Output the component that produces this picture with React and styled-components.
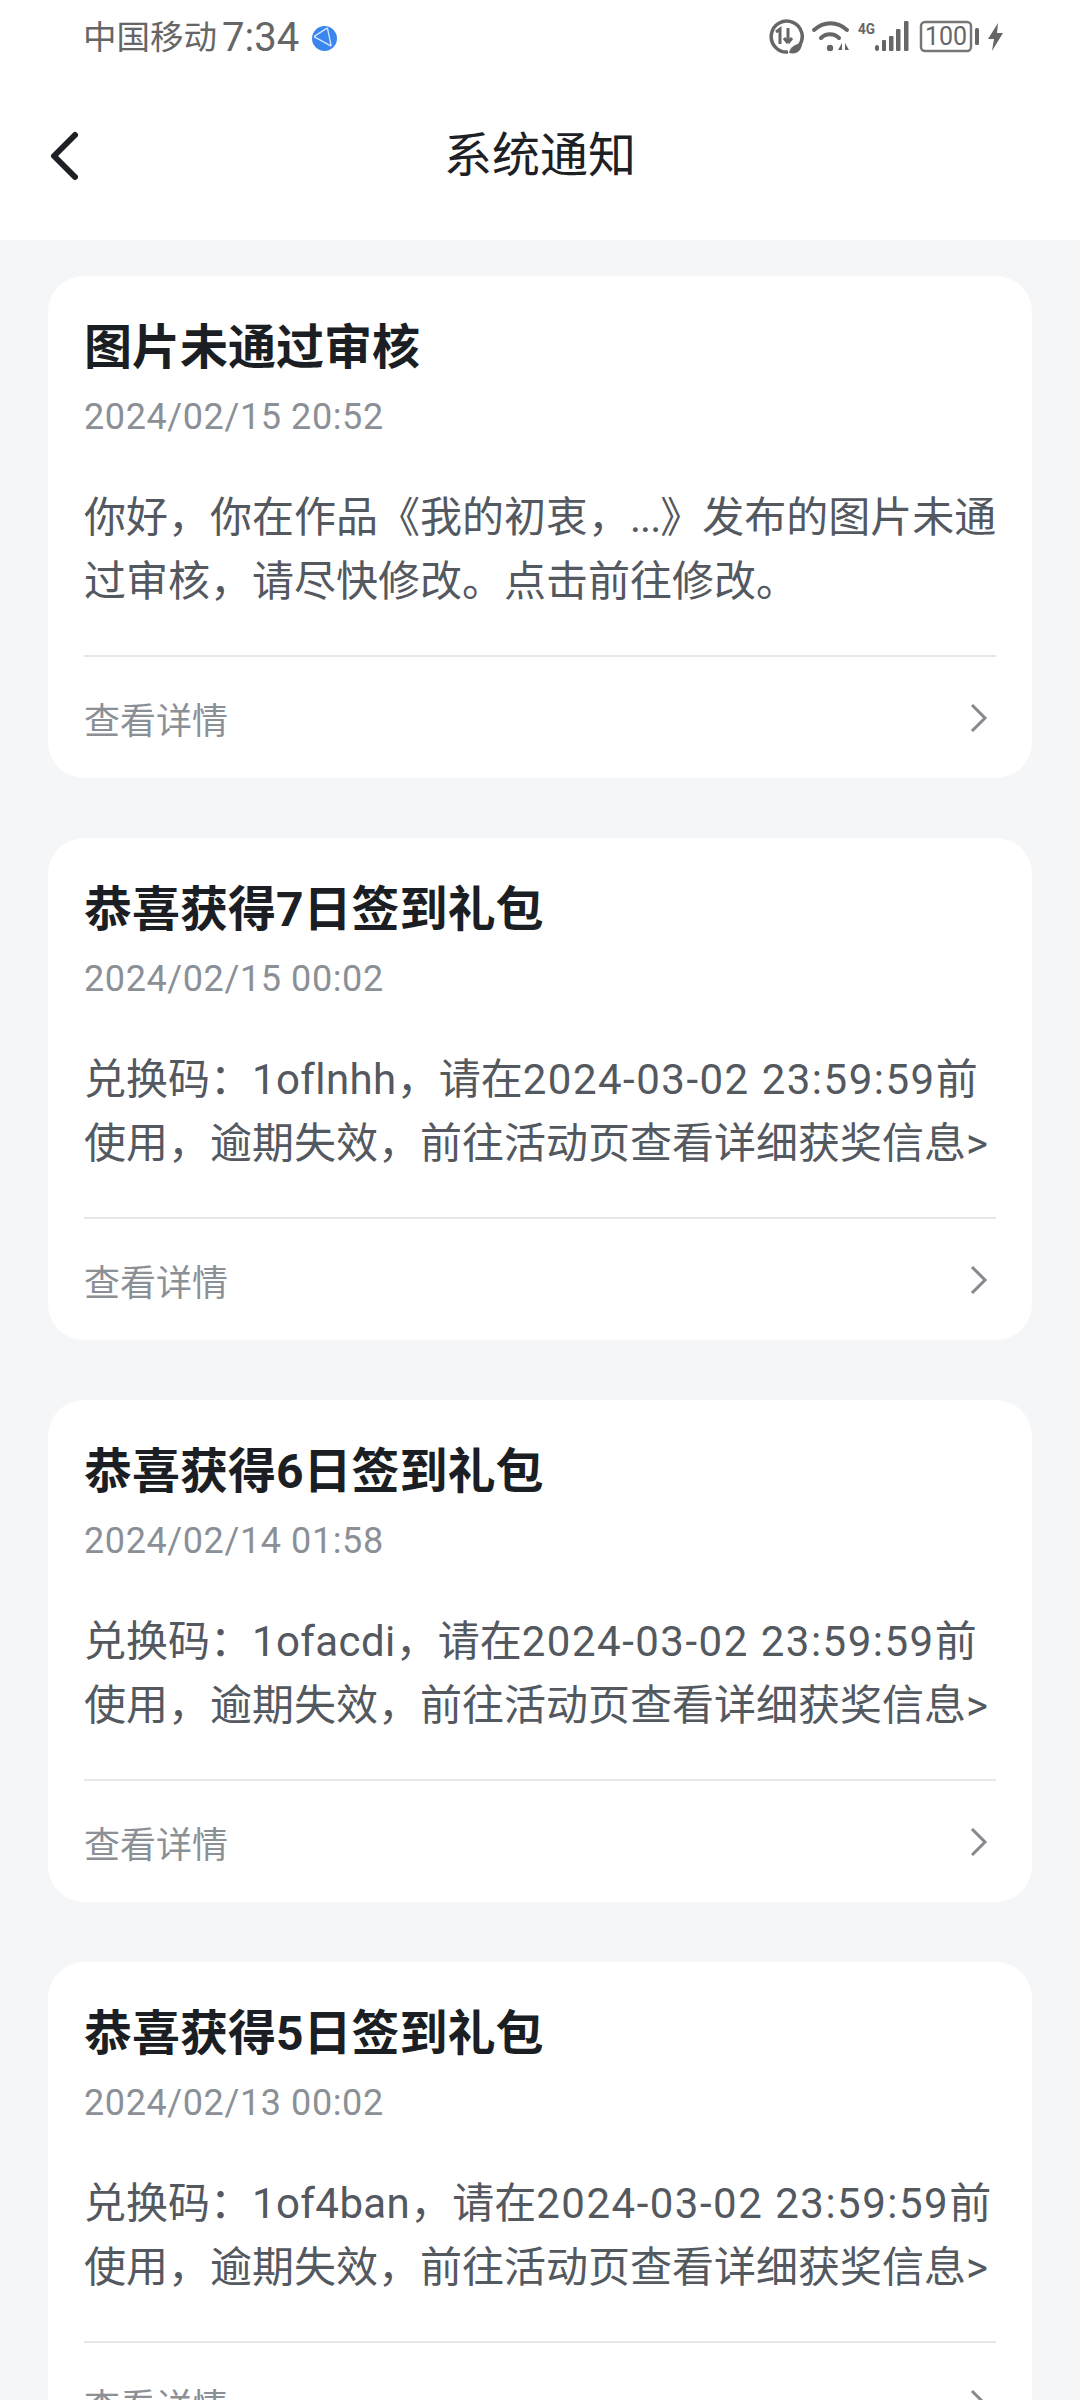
import React from 'react';
import styled, { createGlobalStyle } from 'styled-components';

const GlobalStyle = createGlobalStyle`
  html, body {
    margin: 0;
    padding: 0;
    background: #f5f6f8;
    font-family: Roboto, "Noto Sans CJK SC", sans-serif;
  }
  * { box-sizing: border-box; }
`;

const Page = styled.div`
  width: 1080px;
  height: 2400px;
  overflow: hidden;
  background: #f5f6f8;
`;

const TopArea = styled.header`
  background: #ffffff;
  height: 240px;
`;

const StatusBar = styled.div`
  height: 76px;
  padding: 0 75px 0 83px;
  display: flex;
  align-items: center;
  justify-content: space-between;
`;

const StatusLeft = styled.div`
  display: flex;
  align-items: center;
  color: #666666;
`;

const Carrier = styled.span`
  font-size: 33.5px;
  line-height: 40px;
`;

const Clock = styled.span`
  font-family: Roboto, sans-serif;
  font-size: 40px;
  line-height: 40px;
  margin-left: 5px;
  margin-right: 13px;
`;

const NavBar = styled.div`
  height: 160px;
  padding: 0 0 0 48px;
  display: grid;
  grid-template-columns: 1fr auto 1fr;
  align-items: center;
`;

const BackButton = styled.button`
  background: none;
  border: none;
  padding: 0;
  width: 36px;
  height: 60px;
  display: flex;
  align-items: center;
`;

const NavTitle = styled.h1`
  margin: 0;
  font-size: 48px;
  font-weight: 400;
  color: #1d2025;
  line-height: 60px;
  text-align: center;
  padding-right: 48px;
`;

const List = styled.main`
  padding: 36px 48px 0;
  display: flex;
  flex-direction: column;
  gap: 60px;
`;

const Card = styled.article`
  background: #ffffff;
  border-radius: 36px;
  padding: 36px 36px 0;
  height: 502px;
`;

const CardTitle = styled.h2`
  margin: 0;
  font-size: 48px;
  font-weight: 700;
  line-height: 72px;
  color: #1b1e23;
`;

const CardDate = styled.div`
  margin-top: 8px;
  font-size: 36px;
  line-height: 50px;
  letter-spacing: 0.6px;
  color: #8b8f96;
`;

const CardBody = styled.p`
  margin: 44px 0 0;
  font-size: 42px;
  line-height: 64px;
  color: #54585f;
  white-space: nowrap;
`;

// the digits in the reference run wider than Roboto's
const Code = styled.span`
  letter-spacing: 0.4px;
`;

const Deadline = styled.span`
  letter-spacing: 1.5px;
`;

const Dots = styled.span`
  letter-spacing: -1px;
`;

const CardFooter = styled.div`
  margin-top: 41px;
  border-top: 2px solid #e6e7e9;
  height: 120px;
  padding: 4px 8px 0 0;
  display: flex;
  align-items: center;
  justify-content: space-between;
`;

const MoreLabel = styled.span`
  font-size: 36px;
  color: #8b8f96;
`;

const StatusIcons = () => (
  <svg width="236" height="76" viewBox="769 0 236 76" fill="none">
    {/* data saver */}
    <path d="M799 46 A15.5 15.5 0 1 0 788 52" stroke="#666" strokeWidth="3.5" />
    <path d="M776 32l4-3v15" stroke="#666" strokeWidth="3" />
    <path d="M788 28v15M788 43l-4-5M788 43l4-5" stroke="#666" strokeWidth="3" />
    <path d="M789 53c1-6 6-9 13-10 0 7-5 12-13 10z" fill="#666" />
    {/* wifi */}
    <path d="M814 30c10-9 23-9 33 0" stroke="#666" strokeWidth="4" strokeLinecap="round" />
    <path d="M821 38c5-5 13-5 18 0" stroke="#666" strokeWidth="4" strokeLinecap="round" />
    <circle cx="830" cy="48" r="3.2" fill="#666" />
    <path d="M838 50l4-7v7zM845 43l4 7h-4z" fill="#666" />
    {/* signal */}
    <text x="858" y="34" fontFamily="Roboto" fontWeight="700" fontSize="15" textLength="17" lengthAdjust="spacingAndGlyphs" fill="#666">4G</text>
    <rect x="875" y="45" width="4" height="6" rx="2" fill="#666" />
    <rect x="882" y="40" width="4" height="11" rx="1" fill="#666" />
    <rect x="889" y="36" width="4.5" height="15" rx="1" fill="#666" />
    <rect x="896" y="29" width="4.5" height="22" rx="1" fill="#666" />
    <rect x="904" y="21" width="4.5" height="30" rx="1" fill="#666" />
    {/* battery */}
    <rect x="921" y="22" width="50" height="29" rx="4" stroke="#777" strokeWidth="2.5" />
    <text x="946" y="45" textAnchor="middle" fontFamily="Roboto" fontSize="25" fill="#666">100</text>
    <rect x="975" y="28" width="4" height="17" rx="1.5" fill="#666" />
    <path d="M998 23l-10 16h6l-2 12 11-18h-6z" fill="#666" />
  </svg>
);

const OrbitBadge = () => (
  <svg width="25" height="25" viewBox="0 0 26 26">
    <circle cx="13" cy="13" r="13" fill="#3a86ee" />
    <path d="M2 11l14-9M2 11l18 10M16 2l4 19" stroke="#d5e6fc" strokeWidth="1.4" fill="none" />
  </svg>
);

const redeemLine = '使用，逾期失效，前往活动页查看详细获奖信息>';

const redeemBody = (code) => (
  <>
    兑换码：<Code>{code}</Code>，请在<Deadline>2024-03-02 23:59:59</Deadline>前
    <br />
    {redeemLine}
  </>
);

const notices = [
  {
    title: '图片未通过审核',
    date: '2024/02/15 20:52',
    body: (
      <>
        你好，你在作品《我的初衷，<Dots>...</Dots>》发布的图片未通
        <br />
        过审核，请尽快修改。点击前往修改。
      </>
    ),
  },
  { title: '恭喜获得7日签到礼包', date: '2024/02/15 00:02', body: redeemBody('1oflnhh') },
  { title: '恭喜获得6日签到礼包', date: '2024/02/14 01:58', body: redeemBody('1ofacdi') },
  { title: '恭喜获得5日签到礼包', date: '2024/02/13 00:02', body: redeemBody('1of4ban') },
];

const App = () => (
  <Page>
    <GlobalStyle />
    <TopArea>
      <StatusBar>
        <StatusLeft>
          <Carrier>中国移动</Carrier>
          <Clock>7:34</Clock>
          <OrbitBadge />
        </StatusLeft>
        <StatusIcons />
      </StatusBar>
      <NavBar>
        <BackButton aria-label="返回">
          <svg width="30" height="52" viewBox="0 0 30 52" fill="none">
            <path d="M27 5L6 26l21 21" stroke="#1d2025" strokeWidth="6" strokeLinecap="round" strokeLinejoin="round" />
          </svg>
        </BackButton>
        <NavTitle>系统通知</NavTitle>
      </NavBar>
    </TopArea>
    <List>
      {notices.map((notice) => (
        <Card key={notice.title}>
          <CardTitle>{notice.title}</CardTitle>
          <CardDate>{notice.date}</CardDate>
          <CardBody>{notice.body}</CardBody>
          <CardFooter>
            <MoreLabel>查看详情</MoreLabel>
            <svg width="18" height="30" viewBox="0 0 18 30" fill="none">
              <path d="M2 2l13 13L2 28" stroke="#85888d" strokeWidth="3" />
            </svg>
          </CardFooter>
        </Card>
      ))}
    </List>
  </Page>
);

export default App;
